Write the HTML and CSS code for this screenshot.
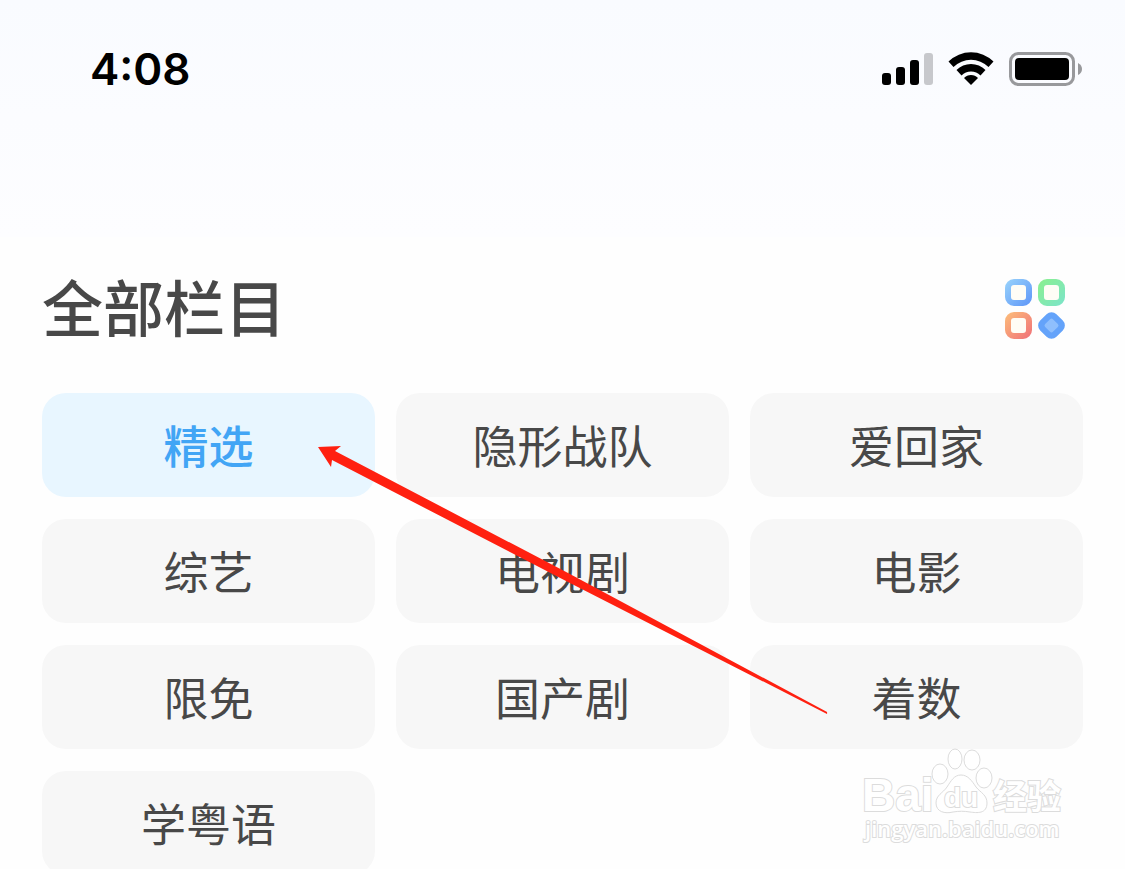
FILE: index.html
```html
<!DOCTYPE html>
<html lang="zh-CN">
<head>
    <meta charset="UTF-8">
    <meta name="viewport" content="width=device-width, initial-scale=1.0">
    <title>全部栏目</title>
    <link rel="stylesheet" href="styles.css">
</head>
<body>
    <header class="status-bar">
        <span class="time">4:08</span>
        <div class="status-icons">
            <svg width="51" height="34" viewBox="0 0 51 34" aria-label="信号">
                <rect x="0" y="21" width="9" height="12" rx="3"/>
                <rect x="14" y="15" width="9" height="18" rx="3"/>
                <rect x="28" y="8" width="9" height="25" rx="3"/>
                <rect x="42" y="1" width="9" height="32" rx="3" fill="#c7c8cc"/>
            </svg>
            <svg width="46" height="34" viewBox="0 0 46 34" aria-label="无线网络">
                <path d="M0.5 9.5 A32 32 0 0 1 45.5 9.5 L40.5 15 A25 25 0 0 0 5.5 15Z"/>
                <path d="M8.5 18 A20.5 20.5 0 0 1 37.5 18 L32.5 23.5 A13.5 13.5 0 0 0 13.5 23.5Z"/>
                <path d="M16 26 A9.5 9.5 0 0 1 30 26 L23 33Z"/>
            </svg>
            <svg width="73" height="34" viewBox="0 0 73 34" aria-label="电池">
                <rect x="1.5" y="1.5" width="63" height="31" rx="8" fill="none" stroke="#98999c" stroke-width="3"/>
                <rect x="6" y="6" width="54" height="22" rx="4"/>
                <path d="M69 11 Q73 13 73 17 Q73 21 69 23Z" fill="#98999c"/>
            </svg>
        </div>
    </header>

    <main class="container">
        <div class="title-row">
            <h1>全部栏目</h1>
            <button class="layout-btn" type="button" aria-label="切换布局">
                <svg width="62" height="62" viewBox="0 0 62 62">
                    <defs>
                        <linearGradient id="blue" x1="0" y1="0" x2="1" y2="1">
                            <stop offset="0" stop-color="#93cdfb"/>
                            <stop offset="1" stop-color="#649cf8"/>
                        </linearGradient>
                        <linearGradient id="green" x1="0" y1="0" x2="1" y2="1">
                            <stop offset="0" stop-color="#8aef94"/>
                            <stop offset="1" stop-color="#7de5c4"/>
                        </linearGradient>
                        <linearGradient id="red" x1="0" y1="0" x2="1" y2="1">
                            <stop offset="0" stop-color="#fbb67a"/>
                            <stop offset="1" stop-color="#f17878"/>
                        </linearGradient>
                    </defs>
                    <rect x="4" y="4" width="21" height="21" rx="6" fill="#fffdf6" stroke="url(#blue)" stroke-width="6"/>
                    <rect x="37" y="4" width="21" height="21" rx="6" fill="#fffdf6" stroke="url(#green)" stroke-width="6"/>
                    <rect x="4" y="37" width="21" height="21" rx="6" fill="#fffdf6" stroke="url(#red)" stroke-width="6"/>
                    <rect x="36" y="36" width="23" height="23" rx="7" fill="#64a3fa" transform="rotate(45 47.5 47.5)"/>
                    <rect x="42" y="42" width="11" height="11" rx="2" fill="#8fbffd" transform="rotate(45 47.5 47.5)"/>
                </svg>
            </button>
        </div>

        <div class="channels">
            <button class="channel active" type="button">精选</button>
            <button class="channel" type="button">隐形战队</button>
            <button class="channel" type="button">爱回家</button>
            <button class="channel" type="button">综艺</button>
            <button class="channel" type="button">电视剧</button>
            <button class="channel" type="button">电影</button>
            <button class="channel" type="button">限免</button>
            <button class="channel" type="button">国产剧</button>
            <button class="channel" type="button">着数</button>
            <button class="channel" type="button">学粤语</button>

            <!-- 指向“精选”的箭头 -->
            <svg class="arrow" viewBox="0 0 510 268">
                <path d="M0 1 L23 0 L17 5 L250 127 L509 266 L509 268 L248 135 L14 14 L13 21Z" fill="#ff2010"/>
            </svg>

            <!-- 水印 -->
            <svg class="watermark" width="210" height="105" viewBox="0 0 210 105">
                <g class="paw">
                    <ellipse cx="79" cy="29" rx="8" ry="10"/>
                    <ellipse cx="94" cy="14" rx="7" ry="10"/>
                    <ellipse cx="111" cy="15" rx="8" ry="10"/>
                    <ellipse cx="123" cy="33" rx="8" ry="10"/>
                    <path d="M100 30 C107 30 111 36 115 42 C120 48 126 50 126 58 C126 69 116 68 109 67 C103 66 98 66 92 67 C84 69 75 67 75 58 C75 50 82 48 86 42 C90 36 93 30 100 30Z"/>
                </g>
                <text class="wm-logo" x="1" y="66">Bai</text>
                <text class="wm-du" x="83" y="62">du</text>
                <text class="wm-cn" x="132" y="64">经验</text>
                <text class="wm-url" x="4" y="92">jingyan.baidu.com</text>
            </svg>
        </div>
    </main>
</body>
</html>
```
FILE: styles.css
```css
* {
    box-sizing: border-box;
}
body {
    margin: 0;
    min-height: 100vh;
    overflow: hidden;
    font-family: "Noto Sans CJK SC", sans-serif;
    color: #484848;
    background-color: #fefefe;
}
button {
    padding: 0;
    border: none;
    font-family: inherit;
    color: inherit;
    cursor: pointer;
}
.status-bar {
    display: flex;
    justify-content: space-between;
    align-items: flex-start;
    height: 237px;
    padding: 52px 43px 0 90px;
    background: linear-gradient(#f9fbff, #fdfdff);
}
.time {
    font-family: Inter, sans-serif;
    font-size: 44px;
    font-weight: 600;
    line-height: 34px;
    color: #000;
}
.status-icons {
    display: flex;
    gap: 15px;
}
.container {
    padding: 41px 42px 0;
}
.title-row {
    display: flex;
    justify-content: space-between;
    align-items: flex-start;
    margin-bottom: 49px;
    padding-right: 17px;
}
h1 {
    margin: 0;
    font-size: 61px;
    font-weight: 500;
    line-height: 56px;
}
.layout-btn {
    display: flex;
    height: 62px;
    background: none;
}
.channels {
    position: relative;
    display: grid;
    grid-template-columns: repeat(3, 1fr);
    gap: 22px 21px;
    margin-top: 53px;
}
.channel {
    height: 104px;
    border-radius: 24px;
    font-size: 45px;
    line-height: 102px;
    background-color: #f7f7f7;
}
.channel.active {
    font-weight: 500;
    color: #42a5f5;
    background-color: #e8f6ff;
}
.arrow {
    position: absolute;
    top: 53px;
    left: 26.5%;
    width: 49%;
    pointer-events: none;
}
.watermark {
    position: absolute;
    top: 352px;
    right: 12px;
    fill: #fff;
    stroke: #dcdcdc;
    stroke-width: 1;
    pointer-events: none;
}
.watermark text {
    stroke-width: 2;
    paint-order: stroke;
}
.wm-logo {
    font: bold 46px "Liberation Sans", sans-serif;
}
.wm-du {
    font: bold 28px "Liberation Sans", sans-serif;
}
.wm-cn {
    font: bold 34px "Noto Sans CJK SC", sans-serif;
}
.wm-url {
    font: 600 22px "Open Sans", sans-serif;
}
```
